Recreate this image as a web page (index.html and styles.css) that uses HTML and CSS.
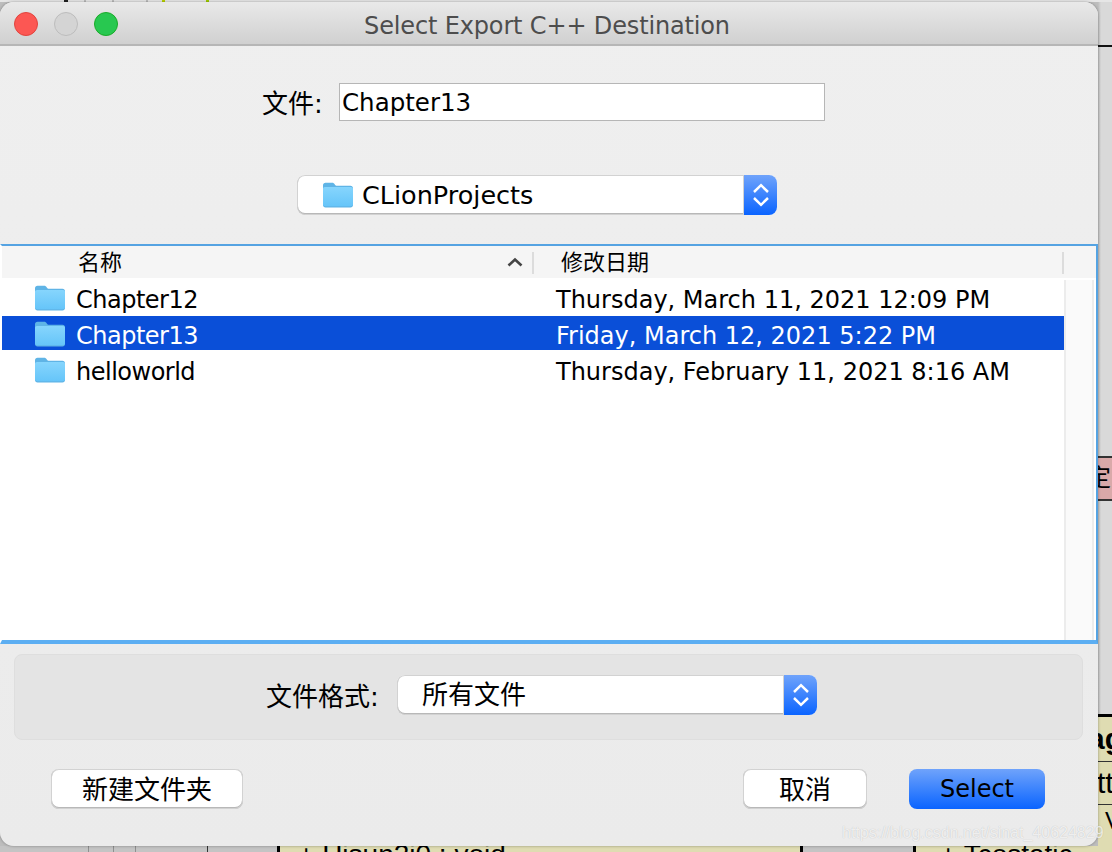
FILE: index.html
```html
<!DOCTYPE html>
<html lang="zh">
<head>
<meta charset="utf-8">
<title>Select Export C++ Destination</title>
<link rel="stylesheet" href="styles.css">
</head>
<body>
<svg width="0" height="0" class="defs">
  <defs>
    <linearGradient id="fg" x1="0" y1="0" x2="0" y2="1"><stop offset="0" stop-color="#86d5fd"/><stop offset="1" stop-color="#66c5f9"/></linearGradient>
    <symbol id="folder" viewBox="0 0 30 26">
      <path d="M0 3.500C0 1.800 1 .8 2.500 .8H9C10.500 .8 11 1.300 12 2.800C12.500 3.600 13 3.800 14 3.800H27.500C29 3.800 30 4.800 30 6.300V23C30 24.500 29 25.500 27.500 25.500H2.500C1 25.500 0 24.500 0 23Z" fill="#5fb4e6"/>
      <path d="M0 6.800C0 5.800 .8 5 2 5H28C29.200 5 30 5.800 30 6.800V22.500C30 23.500 29 24.200 27.500 24.200H2.500C1 24.200 0 23.500 0 22.500Z" fill="url(#fg)"/>
    </symbol>
    <symbol id="stepper" viewBox="0 0 18 26">
      <path d="M2 10L9 3.200L16 10M2 16L9 22.800L16 16" fill="none" stroke="#fff" stroke-width="2.500"/>
    </symbol>
  </defs>
</svg>
<div class="stage">
  <div class="backdrop">
    <div class="bd-top"></div>
    <div class="bd-rule"></div>
    <div class="bd-pink"><span>定</span></div>
    <div class="bd-khaki">
      <div class="bd-k1">ag</div>
      <div class="bd-k2">tt</div>
      <div class="bd-k3">V</div>
    </div>
    <div class="bd-bottom">
      <span class="bd-seg bd-a"></span>
      <span class="bd-seg bd-b">+ Hisun2i0 : void</span>
      <span class="bd-seg bd-c"></span>
      <span class="bd-seg bd-d">+ Tcostatic</span>
    </div>
  </div>
  <main class="window">
    <header class="titlebar">
      <div class="lights">
        <span class="light red"></span><span class="light gray"></span><span class="light green"></span>
      </div>
      <h1 class="title">Select Export C++ Destination</h1>
    </header>
    <div class="name-row">
      <label class="label name-label">文件:</label>
      <div class="text-input">Chapter13</div>
    </div>
    <div class="dir-row">
      <div class="popup dir-popup">
        <div class="popup-value">
          <svg class="folder-icon"><use href="#folder"/></svg>
          <span>CLionProjects</span>
        </div>
        <div class="popup-arrows"><svg class="stepper"><use href="#stepper"/></svg></div>
      </div>
    </div>
    <section class="table">
      <div class="thead">
        <div class="th th-name"><span>名称</span>
          <svg class="sort" viewBox="0 0 16 10"><path d="M1.500 8.500L8 2.500L14.500 8.500" fill="none" stroke="#444" stroke-width="2.600"/></svg>
        </div>
        <div class="th th-date"><span>修改日期</span></div>
        <div class="th th-rest"></div>
      </div>
      <div class="tbody">
        <div class="rows">
          <div class="row">
            <div class="cell-name"><svg class="folder-icon"><use href="#folder"/></svg><span>Chapter12</span></div>
            <div class="cell-date">Thursday, March 11, 2021 12:09 PM</div>
          </div>
          <div class="row selected">
            <div class="cell-name"><svg class="folder-icon"><use href="#folder"/></svg><span>Chapter13</span></div>
            <div class="cell-date">Friday, March 12, 2021 5:22 PM</div>
          </div>
          <div class="row">
            <div class="cell-name"><svg class="folder-icon"><use href="#folder"/></svg><span>helloworld</span></div>
            <div class="cell-date">Thursday, February 11, 2021 8:16 AM</div>
          </div>
        </div>
        <div class="scrolltrack"></div>
      </div>
    </section>
    <section class="format-panel">
      <label class="label format-label">文件格式:</label>
      <div class="popup format-popup">
        <div class="popup-value"><span>所有文件</span></div>
        <div class="popup-arrows"><svg class="stepper"><use href="#stepper"/></svg></div>
      </div>
    </section>
    <footer class="actions">
      <button class="btn btn-new">新建文件夹</button>
      <div class="spacer"></div>
      <button class="btn btn-cancel">取消</button>
      <button class="btn btn-primary">Select</button>
    </footer>
  </main>
  <div class="watermark">https://blog.csdn.net/sinat_40624829</div>
</div>
</body>
</html>
```

FILE: styles.css
```css
* { box-sizing: border-box; }
html, body { margin: 0; padding: 0; }
body {
  font-family: "DejaVu Sans", "Noto Sans CJK SC", sans-serif;
  font-size: 26px;
  color: #000;
  background: #d8d8d8;
}
.defs { position: absolute; }
.stage {
  position: relative;
  width: 1112px;
  height: 852px;
  overflow: hidden;
  padding-top: 2px;
  background: linear-gradient(90deg, #bdbdbd 1098px, #d9d9d9 1101px);
}
.backdrop { position: absolute; inset: 0; }
.bd-top {
  height: 2px;
  background: linear-gradient(90deg,
    #e6e6e6 64px, #222 64px, #222 68px, #e6e6e6 68px,
    #e6e6e6 84px, #bbb 84px, #bbb 86px, #e6e6e6 86px,
    #e6e6e6 112px, #bbb 112px, #bbb 114px, #e6e6e6 114px,
    #e6e6e6 146px, #bbb 146px, #bbb 148px, #e6e6e6 148px,
    #e6e6e6 162px, #b8d000 162px, #b8d000 165px, #e6e6e6 165px,
    #e6e6e6 206px, #9ecb00 206px, #9ecb00 209px, #e6e6e6 209px);
}
.bd-rule {
  position: absolute;
  left: 1098px;
  top: 45px;
  width: 14px;
  height: 2px;
  background: #111;
}
.bd-pink {
  position: absolute;
  left: 1098px;
  top: 456px;
  width: 14px;
  height: 45px;
  background: #d9a9a9;
  border-top: 2px solid #333;
  border-bottom: 2px solid #333;
  overflow: hidden;
}
.bd-pink span {
  display: block;
  width: 24px;
  margin-left: -11px;
  font-size: 24px;
  line-height: 41px;
}
.bd-khaki {
  position: absolute;
  left: 1098px;
  top: 714px;
  width: 14px;
  height: 138px;
  background: #dfdcb2;
  border-top: 3px solid #000;
  overflow: hidden;
  font-family: "Liberation Sans", sans-serif;
  font-size: 30px;
}
.bd-k1 { height: 45px; line-height: 44px; font-weight: 700; border-bottom: 1px solid #333; margin-left: -10px; padding-left: 0; white-space: nowrap; }
.bd-k2 { height: 43px; line-height: 42px; border-bottom: 1px solid #333; margin-left: -1px; }
.bd-k3 { line-height: 30px; font-size: 24px; margin-left: 7px; margin-top: 1px; }
.bd-bottom {
  position: absolute;
  left: 0;
  right: 0;
  top: 846px;
  height: 6px;
  display: flex;
  overflow: hidden;
}
.bd-seg {
  display: block;
  height: 6px;
  overflow: hidden;
  white-space: nowrap;
  font-family: "Liberation Sans", sans-serif;
  font-size: 28px;
  line-height: 18px;
}
.bd-a {
  width: 277px;
  background: linear-gradient(90deg, #c4c4c4 88px, #8f8f8f 88px, #8f8f8f 89px, #c4c4c4 89px, #c4c4c4 113px, #8f8f8f 113px, #8f8f8f 114px, #c4c4c4 114px, #c4c4c4 135px, #8f8f8f 135px, #8f8f8f 136px, #c4c4c4 136px, #c4c4c4 207px, #333 207px, #333 208px, #c4c4c4 208px);
}
.bd-b {
  width: 526px;
  background: #dfdcb2;
  border-left: 3px solid #000;
  border-right: 3px solid #000;
  padding-left: 18px;
}
.bd-c { width: 110px; background: #c4c4c4; }
.bd-d { flex: 1; background: #dfdcb2; border-left: 3px solid #000; padding-left: 24px; }

.window {
  position: relative;
  width: 1098px;
  height: 844px;
  background: linear-gradient(#efefef, #ebebeb);
  border-radius: 14px;
  overflow: hidden;
  display: flex;
  flex-direction: column;
  box-shadow: 0 0 3px rgba(0, 0, 0, .35);
}
.titlebar {
  position: relative;
  height: 44px;
  flex: none;
  display: flex;
  align-items: center;
  justify-content: center;
  background: linear-gradient(#e9e9e9, #d0d0d0);
  border-bottom: 2px solid #b6b6b6;
}
.lights {
  position: absolute;
  left: 14px;
  top: 10px;
  display: flex;
  gap: 16px;
}
.light { width: 24px; height: 24px; border-radius: 50%; display: block; }
.red { background: #fc5753; border: 1px solid #e0443e; }
.gray { background: #d4d4d4; border: 1px solid #bcbcbc; }
.green { background: #28c850; border: 1px solid #1aab29; }
.title {
  margin: 5px 0 0 -4px;
  font-size: 24px;
  letter-spacing: -.15px;
  font-weight: 400;
  color: #4d4d4d;
  line-height: 38px;
  white-space: nowrap;
}

.name-row {
  display: flex;
  align-items: center;
  height: 38px;
  margin-top: 37px;
  padding-left: 262px;
  flex: none;
}
.label { white-space: nowrap; line-height: 38px; }
.name-label { width: 77px; padding-top: 3px; }
.text-input {
  width: 486px;
  height: 38px;
  background: #fff;
  border: 1px solid #b6b6b6;
  padding-left: 2px;
  font-size: 24.500px;
  line-height: 37px;
}

.dir-row {
  display: flex;
  margin-top: 54px;
  padding-left: 297px;
  flex: none;
}
.popup {
  display: flex;
  height: 40px;
  border-radius: 8px;
  background: #fff;
  overflow: hidden;
}
.dir-popup { width: 480px; }
.format-popup { width: 420px; margin-bottom: 4px; }
.popup-value {
  flex: 1;
  display: flex;
  align-items: center;
  line-height: 38px;
  border-radius: 8px 0 0 8px;
  box-shadow: inset 0 0 0 1px #d2d2d2, inset 0 -1px 0 1px #b8b8b8;
}
.dir-popup .popup-value { padding-left: 26px; gap: 9px; font-size: 25.500px; }
.format-popup .popup-value { padding-left: 25px; }
.popup-arrows {
  flex: none;
  width: 33px;
  display: flex;
  align-items: center;
  justify-content: center;
  background: linear-gradient(#6fa3fb, #0a64ff);
}
.stepper { width: 18px; height: 26px; display: block; }
.folder-icon { width: 30px; height: 26px; flex: none; display: block; }

.table {
  flex: none;
  height: 400px;
  margin-top: 29px;
  border-style: solid;
  border-width: 2px 2px 4px 2px;
  border-color: #55a3e2 #55a3e2 #5caef2 #fff;
  background: #fff;
  display: flex;
  flex-direction: column;
}
.thead {
  height: 32px;
  flex: none;
  display: flex;
  background: #f5f5f5;
  font-size: 22px;
  line-height: 30px;
}
.th { display: flex; align-items: center; position: relative; padding-top: 2px; }
.th-name { width: 532px; padding-left: 76px; }
.th-date { width: 530px; padding-left: 27px; }
.th-rest { flex: 1; }
.th-name::after, .th-date::after {
  content: "";
  position: absolute;
  right: 0;
  top: 6px;
  bottom: 4px;
  width: 2px;
  background: #dcdcdc;
}
.sort { position: absolute; left: 505px; top: 11px; width: 16px; height: 10px; }
.tbody { flex: 1; display: flex; padding-top: 2px; }
.rows { width: 1062px; flex: none; }
.row {
  height: 36px;
  display: flex;
  align-items: center;
  font-size: 24px;
}
.row.selected { background: linear-gradient(#0a4fd8 34px, transparent 34px); color: #fff; }
.cell-name {
  width: 554px;
  flex: none;
  display: flex;
  align-items: center;
  gap: 11px;
  padding-left: 33px;
  letter-spacing: -.5px;
}
.cell-name span, .cell-date { padding-top: 3px; }
.scrolltrack {
  flex: none;
  width: 30px;
  background: #fafafa;
  border-left: 2px solid #ececec;
  border-right: 2px solid #ececec;
}

.format-panel {
  flex: none;
  width: 1069px;
  height: 86px;
  margin: 10px 0 0 14px;
  background: #e4e4e4;
  border: 1px solid #dedede;
  border-radius: 8px;
  display: flex;
  align-items: center;
  padding-left: 251px;
}
.format-label { width: 131px; }

.actions {
  flex: none;
  display: flex;
  align-items: center;
  margin-top: 29px;
  padding: 0 53px 0 51px;
}
.spacer { flex: 1; }
.btn {
  height: 40px;
  padding: 0 0 4px;
  font: inherit;
  color: #000;
  border-radius: 8px;
  border: 0;
  background: #fff;
  box-shadow: inset 0 0 0 1px #d2d2d2, inset 0 -1px 0 1px #b8b8b8;
}
.btn-new { width: 192px; }
.btn-cancel { width: 124px; }
.btn-primary {
  width: 136px;
  margin-left: 42px;
  padding: 0;
  font-size: 24px;
  background: linear-gradient(#6fa3fb, #0a64ff);
  box-shadow: none;
}
.watermark {
  position: absolute;
  left: 842px;
  top: 822px;
  font-family: "Liberation Sans", sans-serif;
  font-size: 16px;
  line-height: 22px;
  color: rgba(255,255,255,.75);
  text-shadow: 0 0 1px rgba(0,0,0,.22);
  white-space: nowrap;
}
```
